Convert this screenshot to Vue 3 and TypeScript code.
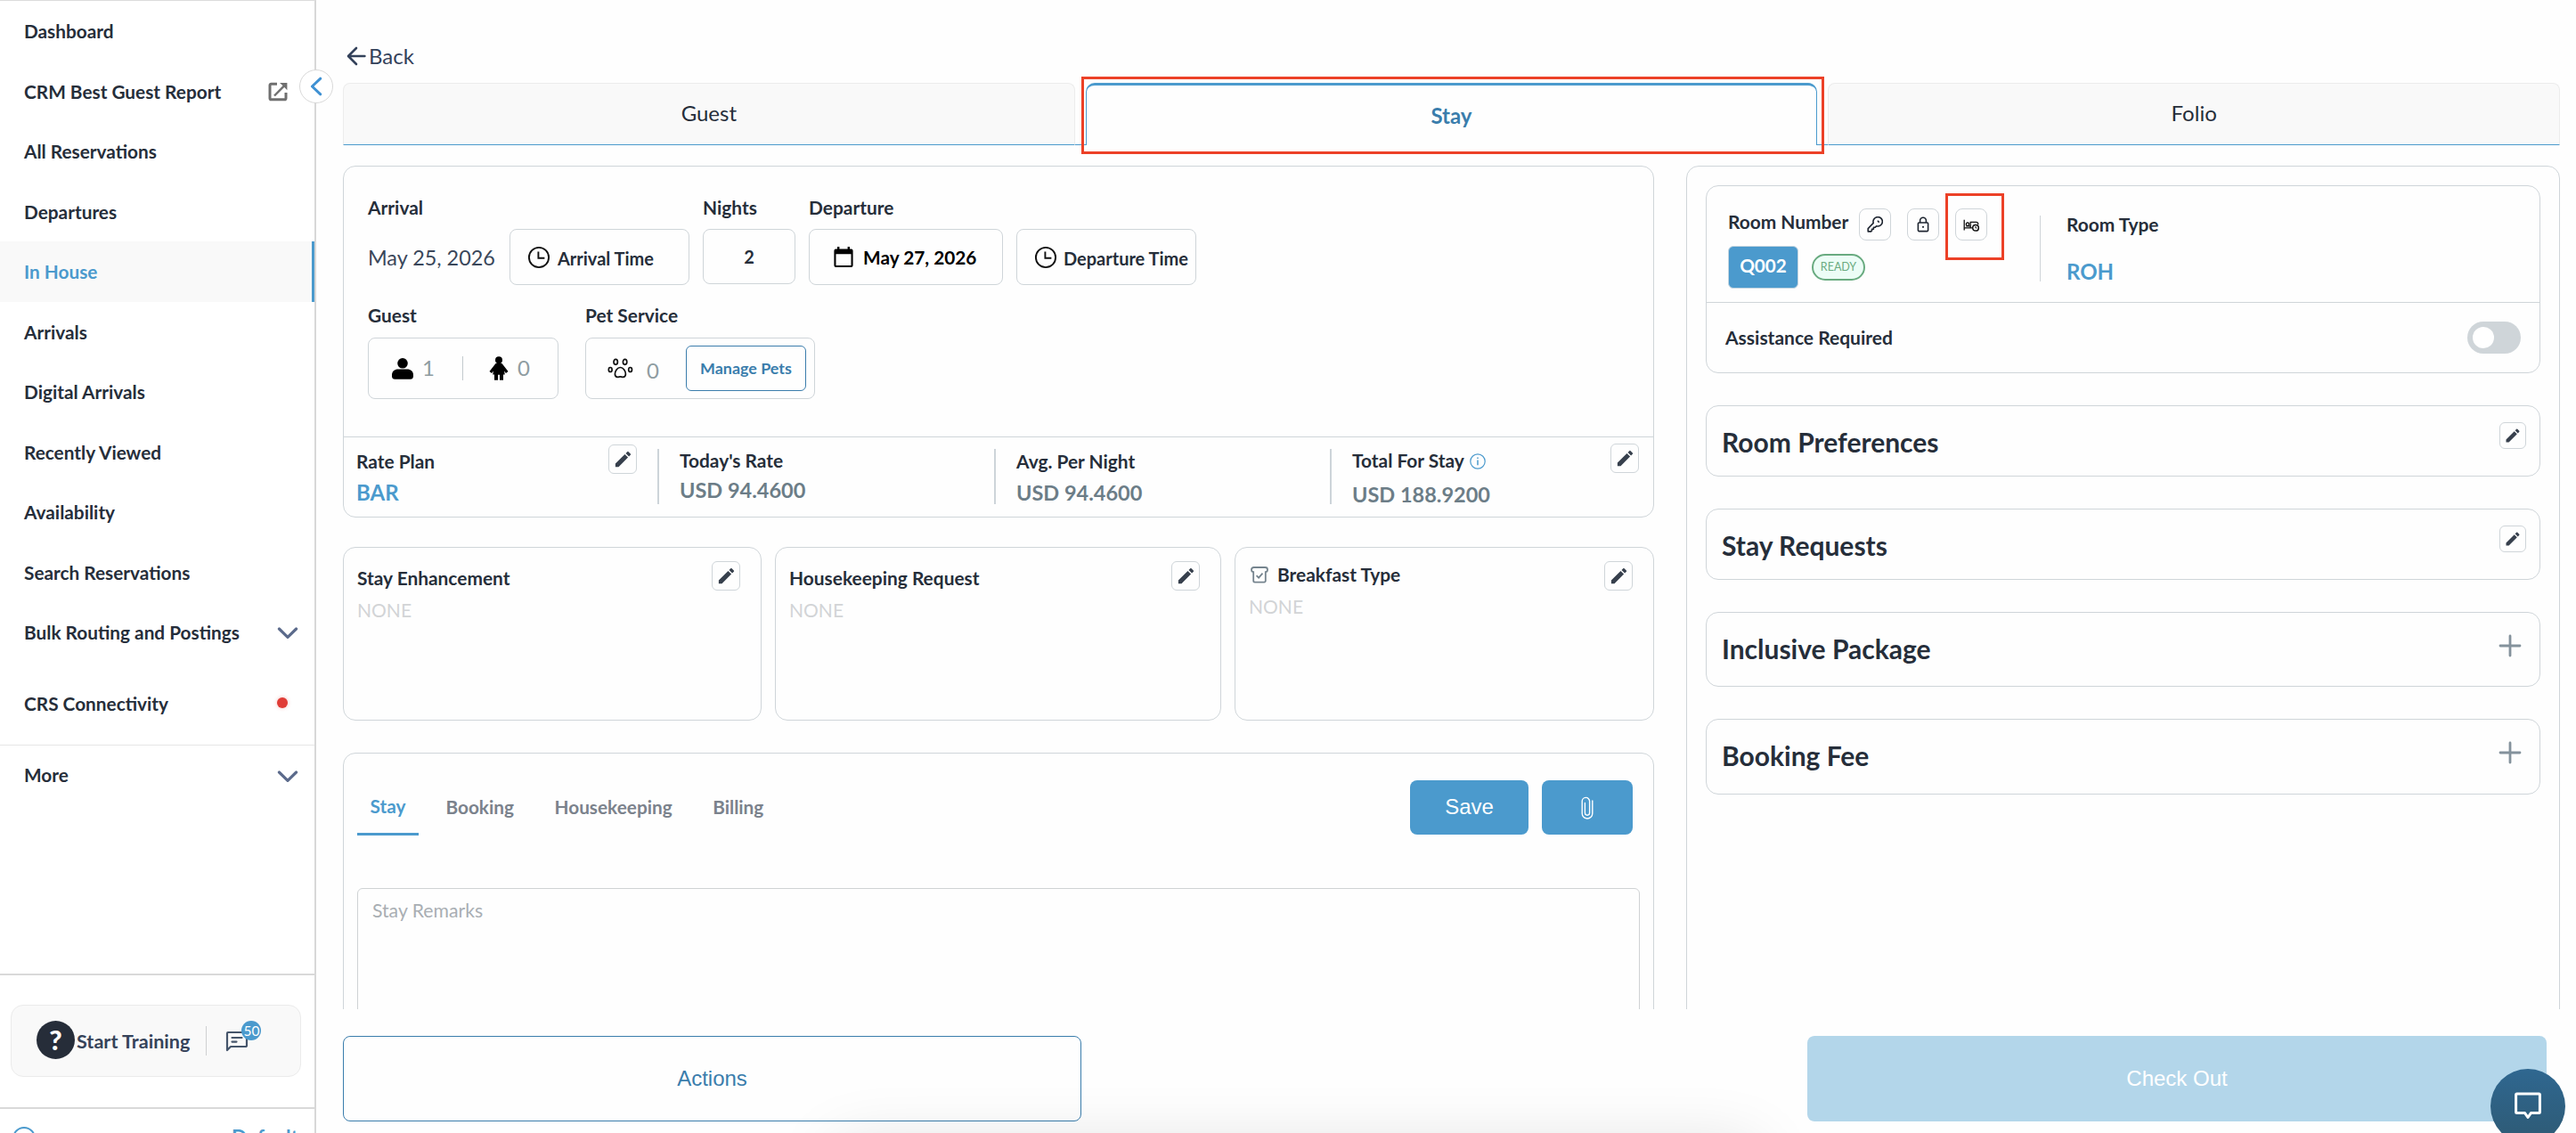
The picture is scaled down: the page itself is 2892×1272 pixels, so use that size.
<script setup lang="ts">
interface NavItem {
  label: string
  icon?: 'external' | 'chevron' | 'dot'
  tall?: boolean
  active?: boolean
}

const nav: NavItem[] = [
  { label: 'Dashboard' },
  { label: 'CRM Best Guest Report', icon: 'external' },
  { label: 'All Reservations' },
  { label: 'Departures' },
  { label: 'In House', active: true },
  { label: 'Arrivals' },
  { label: 'Digital Arrivals' },
  { label: 'Recently Viewed' },
  { label: 'Availability' },
  { label: 'Search Reservations' },
  { label: 'Bulk Routing and Postings', icon: 'chevron' },
  { label: 'CRS Connectivity', icon: 'dot', tall: true },
]

const pencil =
  'M3 17.25V21h3.75L17.81 9.94l-3.75-3.75L3 17.25zM20.71 7.04a.996.996 0 0 0 0-1.41l-2.34-2.34a.996.996 0 0 0-1.41 0l-1.83 1.83 3.75 3.75 1.83-1.83z'

const sections = [
  { title: 'Room Preferences', kind: 'editable', height: 80 },
  { title: 'Stay Requests', kind: 'editable', height: 80 },
  { title: 'Inclusive Package', kind: 'addable', height: 84 },
  { title: 'Booking Fee', kind: 'addable', height: 85 },
]
</script>

<template>
  <div class="app">
    <aside class="sidebar">
      <nav class="nav">
        <div v-for="n in nav" :key="n.label" class="nav-item" :class="{ active: n.active, tall: n.tall }">
          <span>{{ n.label }}</span>
          <svg v-if="n.icon === 'external'" class="ext" width="22" height="22" viewBox="0 0 22 22" fill="none" stroke="#6f6f6f" stroke-width="3">
            <path d="M10 2.2H3.6a1.6 1.6 0 0 0-1.6 1.6v14.4a1.6 1.6 0 0 0 1.6 1.6h14.8a1.6 1.6 0 0 0 1.6-1.6V12" />
            <path d="M7 15.5L18.5 3.8" stroke-width="2.4" />
            <path d="M13 .9h8.4v8.4l-2.6-2.7-3-3z" fill="#6f6f6f" stroke="none" />
          </svg>
          <svg v-else-if="n.icon === 'chevron'" class="chev" width="24" height="14" viewBox="0 0 24 14" fill="none" stroke="#5c6b8c" stroke-width="3.2" stroke-linecap="round" stroke-linejoin="round">
            <path d="M2.4 2L12 11.4 21.6 2" />
          </svg>
          <i v-else-if="n.icon === 'dot'" class="dot"></i>
        </div>
      </nav>
      <div class="nav-item more">
        <span>More</span>
        <svg class="chev" width="24" height="14" viewBox="0 0 24 14" fill="none" stroke="#5c6b8c" stroke-width="3.2" stroke-linecap="round" stroke-linejoin="round">
          <path d="M2.4 2L12 11.4 21.6 2" />
        </svg>
      </div>
      <div class="training-wrap">
        <div class="training">
          <span class="help">?</span>
          <span class="training-label">Start Training</span>
          <span class="tsep"></span>
          <span class="msg">
            <svg width="26" height="24" viewBox="0 0 26 24" fill="none" stroke="#45556b" stroke-width="2.2" stroke-linejoin="round" stroke-linecap="round">
              <path d="M2 22V3.2A1.2 1.2 0 0 1 3.2 2h19.6A1.2 1.2 0 0 1 24 3.2v13.6a1.2 1.2 0 0 1-1.2 1.2H6z" />
              <path d="M7.5 8h11M7.5 12.6h5" />
            </svg>
            <b class="badge">50</b>
          </span>
        </div>
      </div>
      <div class="property">
        <span class="ring"></span>
        <span>Default</span>
      </div>
      <button class="collapse">
        <svg width="16" height="22" viewBox="0 0 16 22" fill="none" stroke="#3f91d3" stroke-width="3" stroke-linecap="round" stroke-linejoin="round">
          <path d="M12.8 2.2L3.4 11l9.4 8.8" />
        </svg>
      </button>
    </aside>

    <main class="main">
      <div class="back">
        <svg width="22" height="22" viewBox="0 0 22 22" fill="none" stroke="#33415a" stroke-width="2.6" stroke-linecap="round" stroke-linejoin="round">
          <path d="M20.4 11H2.4M11 2L2 11l9 9" />
        </svg>
        <span>Back</span>
      </div>

      <div class="tabs">
        <div class="tab">Guest</div>
        <div class="gap"></div>
        <div class="tab on">Stay<span class="mark mark-tab"></span></div>
        <div class="gap"></div>
        <div class="tab">Folio</div>
      </div>

      <div class="content">
        <section class="left">
          <div class="card stay">
            <div class="stay-top">
              <div class="fields">
                <div class="field arrival">
                  <label>Arrival</label>
                  <div class="row">
                    <span class="date">May 25, 2026</span>
                    <div class="box time">
                      <svg width="26" height="26" viewBox="0 0 26 26" fill="none" stroke="#111" stroke-width="1.9"><circle cx="13" cy="13" r="11.1" /><path d="M12.4 6.6v7.2h7" /></svg>
                      <span>Arrival Time</span>
                    </div>
                  </div>
                </div>
                <div class="field nights">
                  <label>Nights</label>
                  <div class="box">2</div>
                </div>
                <div class="field departure">
                  <label>Departure</label>
                  <div class="box">
                    <svg width="22" height="24" viewBox="0 0 22 24"><path fill="#000" fill-rule="evenodd" d="M4 0h2.400v2.400h9.200V0H18v2.400h1.600A2 2 0 0 1 21.600 4.400V21a2 2 0 0 1-2 2H2.400a2 2 0 0 1-2-2V4.400a2 2 0 0 1 2-2H4zM2.500 8.200V21h17V8.200z" /></svg>
                    <span>May 27, 2026</span>
                  </div>
                </div>
                <div class="field deptime">
                  <div class="box time">
                    <svg width="26" height="26" viewBox="0 0 26 26" fill="none" stroke="#111" stroke-width="1.9"><circle cx="13" cy="13" r="11.1" /><path d="M12.4 6.6v7.2h7" /></svg>
                    <span>Departure Time</span>
                  </div>
                </div>
              </div>

              <div class="fields second">
                <div class="field guests">
                  <label>Guest</label>
                  <div class="box">
                    <svg width="24" height="24" viewBox="0 0 24 24"><circle cx="12" cy="5.800" r="5.800" /><path d="M0 20.500v-1.500c0-4 3-6.400 7-6.400h10c4 0 7 2.400 7 6.400v1.500c0 2-1.300 3.300-3.300 3.300H3.300C1.300 23.800 0 22.500 0 20.500z" /></svg>
                    <span class="num n1">1</span>
                    <i class="gsep"></i>
                    <svg class="child" width="22" height="28" viewBox="0 0 22 28"><circle cx="11" cy="4.200" r="4" /><path d="M7.500 8h7l7 9-2.500 2-2-2.500.8 4H16v6.300h-4v-6h-2v6H6v-6.300H4.200l.8-4L3 19 .500 17z" /></svg>
                    <span class="num">0</span>
                  </div>
                </div>
                <div class="field pets">
                  <label>Pet Service</label>
                  <div class="box">
                    <svg width="29" height="23" viewBox="0 0 29 23" fill="none" stroke="#111" stroke-width="1.700"><ellipse cx="9.200" cy="4.300" rx="2.200" ry="3" /><ellipse cx="19.600" cy="4.300" rx="2.200" ry="3" /><ellipse cx="3.200" cy="13" rx="1.900" ry="2.500" /><ellipse cx="25.600" cy="13" rx="1.900" ry="2.500" /><path d="M14.400 10.500c-3.400 0-6 4.400-6 7.600 0 2 1.200 3.300 3 3.300 1.200 0 1.800-.5 3-.5s1.800.5 3 .5c1.800 0 3-1.300 3-3.300 0-3.200-2.600-7.600-6-7.600z" /></svg>
                    <span class="num n0">0</span>
                    <button class="manage">Manage Pets</button>
                  </div>
                </div>
              </div>
            </div>
            <div class="rates">
              <div class="rate r1">
                <div><h4>Rate Plan</h4><p class="blue">BAR</p></div>
                <button class="edit"><svg width="23" height="23" viewBox="0 0 24 24" fill="#37404d"><path :d="pencil" /></svg></button>
              </div>
              <i class="rsep"></i>
              <div class="rate r2"><div><h4>Today's Rate</h4><p>USD 94.4600</p></div></div>
              <i class="rsep"></i>
              <div class="rate r3"><div><h4>Avg. Per Night</h4><p>USD 94.4600</p></div></div>
              <i class="rsep"></i>
              <div class="rate r4">
                <div>
                  <h4>Total For Stay
                    <svg width="18" height="18" viewBox="0 0 18 18" fill="none" stroke="#4b9acd" stroke-width="1.200"><circle cx="9" cy="9" r="8.200" /><path d="M9 7.600v5.600M9 4.600v1.500" stroke-width="1.500" /></svg>
                  </h4>
                  <p>USD 188.9200</p>
                </div>
                <button class="edit"><svg width="23" height="23" viewBox="0 0 24 24" fill="#37404d"><path :d="pencil" /></svg></button>
              </div>
            </div>
          </div>

          <div class="trio">
            <div class="card mini m1">
              <div><h4>Stay Enhancement</h4><p>NONE</p></div>
              <button class="edit"><svg width="23" height="23" viewBox="0 0 24 24" fill="#37404d"><path :d="pencil" /></svg></button>
            </div>
            <div class="card mini m2">
              <div><h4>Housekeeping Request</h4><p>NONE</p></div>
              <button class="edit"><svg width="23" height="23" viewBox="0 0 24 24" fill="#37404d"><path :d="pencil" /></svg></button>
            </div>
            <div class="card mini m3">
              <div>
                <h4>
                  <svg width="20" height="19" viewBox="0 0 20 19" fill="none" stroke="#75848e" stroke-width="1.800"><path d="M3.600 1h12.800C18 1 19 2 19 3.500S18.200 6.200 16.800 6.200V16a1.600 1.600 0 0 1-1.600 1.600H4.800A1.600 1.600 0 0 1 3.200 16V6.200C1.800 6.200 1 5 1 3.500S2 1 3.600 1z" /><path d="M6.600 10.200l2.500 2.500 4.400-5" /></svg>
                  Breakfast Type
                </h4>
                <p>NONE</p>
              </div>
              <button class="edit"><svg width="23" height="23" viewBox="0 0 24 24" fill="#37404d"><path :d="pencil" /></svg></button>
            </div>
          </div>

          <div class="card remarks">
            <div class="rhead">
              <div class="rtabs">
                <span class="on">Stay</span><span>Booking</span><span>Housekeeping</span><span>Billing</span>
              </div>
              <div class="rbtns">
                <button class="save">Save</button>
                <button class="attach">
                  <svg width="14" height="26" viewBox="0 0 14 26" fill="none" stroke="#fff" stroke-width="1.400" stroke-linecap="round"><path d="M12.800 5v14.200a5.800 5.800 0 0 1-11.600 0V5.600a4.200 4.200 0 0 1 8.400 0v13a2.600 2.600 0 0 1-5.200 0V7.500" /></svg>
                </button>
              </div>
            </div>
            <div class="textarea">Stay Remarks</div>
          </div>
        </section>

        <section class="right card">
          <div class="card room">
            <div class="room-top">
              <div class="rn">
                <div class="rn-head">
                  <h4>Room Number</h4>
                  <button class="ib">
                    <svg width="18" height="18" viewBox="0 0 18 18" fill="none" stroke="#1e2530" stroke-width="1.600" stroke-linejoin="round"><path d="M7.200 7.400A5.200 5.200 0 1 1 10.600 10.800L9 12.300H7.400v1.900H5.500V16L4.500 16.900H1.200v-3.300z" /><path d="M12.300 5.200l.9.900" stroke-linecap="round" /></svg>
                  </button>
                  <button class="ib">
                    <svg width="14" height="18" viewBox="0 0 14 18" fill="none" stroke="#1e2530" stroke-width="1.600"><rect x="1.400" y="7" width="11.200" height="9.600" rx="1" /><path d="M3.600 7V4.600a3.400 3.400 0 0 1 6.800 0V7" /><circle cx="7" cy="11.800" r="1.100" fill="#1e2530" stroke="none" /></svg>
                  </button>
                  <button class="ib marked">
                    <svg width="18" height="14" viewBox="0 0 18 14" fill="none" stroke="#111" stroke-width="1.300"><path d="M1.200.8v11.800M1.200 9.800h9.200M8.200 9.800V3.400h6.500q2 0 2 2v.8" /><circle cx="5" cy="5.700" r="1.700" /><path d="M3.200 7.900h4.800" /><circle cx="14" cy="9.800" r="3.300" stroke-width="1.500" /><path d="M14 8v2h1.300" stroke-width="1" /></svg>
                    <span class="mark mark-btn"></span>
                  </button>
                </div>
                <div class="rn-vals">
                  <span class="q">Q002</span><span class="ready">READY</span>
                </div>
              </div>
              <i class="vsep"></i>
              <div class="rt"><h4>Room Type</h4><p>ROH</p></div>
            </div>
            <div class="assist"><span>Assistance Required</span><i class="toggle"></i></div>
          </div>

          <div v-for="s in sections" :key="s.title" class="card sect" :class="s.kind" :style="{ height: s.height + 'px' }">
            <h3>{{ s.title }}</h3>
            <button v-if="s.kind === 'editable'" class="edit sm"><svg width="20" height="20" viewBox="0 0 24 24" fill="#37404d"><path :d="pencil" /></svg></button>
            <svg v-else class="plus" width="26" height="26" viewBox="0 0 26 26" stroke="#84929c" stroke-width="2.800" stroke-linecap="round"><path d="M13 2v22M2 13h22" /></svg>
          </div>
        </section>
      </div>

      <footer class="footer">
        <button class="actions">Actions</button>
        <button class="checkout">Check Out</button>
        <span class="glow"></span>
      </footer>
    </main>

    <button class="chat">
      <svg width="32" height="34" viewBox="0 0 32 34" fill="none" stroke="#fff" stroke-width="3" stroke-linejoin="round"><path d="M3.600 3h24.800a1 1 0 0 1 1 1v19.600a1 1 0 0 1-1 1h-9L16 29.500l-3.400-4.900h-9a1 1 0 0 1-1-1V4a1 1 0 0 1 1-1z" /></svg>
    </button>
  </div>
</template>

<style>
body { background: #fff; }
</style>

<style scoped>
* { box-sizing: border-box; }
h3, h4, p { margin: 0; }
button { padding: 0; border: 0; background: none; font: inherit; color: inherit; }
.app { position: relative; display: flex; width: 2892px; height: 1272px; overflow: hidden; background: #fefefe; font-family: "Lato", sans-serif; font-size: 20px; line-height: 24px; color: #262e3a; }
h4, label { font-size: 20.900px; line-height: 24px; font-weight: 700; white-space: nowrap; }

.sidebar { position: relative; display: flex; flex-direction: column; flex: none; width: 355px; height: 1272px; border-right: 2px solid #d8d8d8; border-top: 1px solid #dcdcdc; background: #fff; }
.nav-item { display: flex; align-items: center; justify-content: space-between; height: 67.500px; padding: 1px 32px 0 27px; font-size: 20.800px; font-weight: 700; white-space: nowrap; }
.nav-item.active { color: #4b9acd; background: #f9f9f9; border-right: 3px solid #4b9acd; }
.nav-item.tall { height: 92px; }
.ext { margin-right: -2px; }
.chev { margin-right: -14px; margin-top: 2px; }
.dot { width: 12px; height: 12px; border-radius: 50%; background: #e03c36; box-shadow: 0 0 4px rgba(224, 60, 54, .35); margin-right: -2px; margin-top: -3px; }
.more { height: 70px; padding-top: 0; padding-bottom: 2px; border-top: 1px solid #e6e6e6; }
.more .chev { margin-top: 3px; }
.training-wrap { margin-top: auto; padding: 33px 15px 0 12px; height: 152px; border-top: 2px solid #d9d9d9; border-bottom: 2px solid #d9d9d9; }
.training { display: flex; align-items: center; height: 81px; border: 1px solid #ebebeb; border-radius: 14px; background: #f9f9f9; padding-left: 28px; }
.help { width: 43px; height: 43px; border-radius: 50%; background: #262d39; color: #fff; font-size: 31px; line-height: 42px; font-weight: 900; text-align: center; margin-top: -2px; }
.training-label { margin-left: 2px; font-size: 21.600px; font-weight: 700; color: #36435a; white-space: nowrap; }
.tsep { width: 1px; height: 33px; background: #cfd0d2; margin-left: 18px; }
.msg { position: relative; margin-left: 21px; height: 24px; }
.msg svg { display: block; }
.badge { position: absolute; left: 18px; top: -11px; width: 22px; height: 22px; border-radius: 50%; background: #4b9acd; color: #fff; font-size: 15.500px; line-height: 22px; font-weight: 400; text-align: center; }
.property { display: flex; justify-content: space-between; height: 27px; padding: 20px 18px 0 14px; color: #4b9acd; font-size: 22.500px; font-weight: 700; overflow: hidden; }
.ring { width: 26px; height: 26px; flex: none; border: 2px solid #4b9acd; border-radius: 50%; }
.collapse { position: absolute; left: 336px; top: 77px; width: 38px; height: 38px; border-radius: 50%; border: 1px solid #d9d9d9; background: #fff; display: flex; align-items: center; justify-content: center; z-index: 2; }

.main { flex: 1; display: flex; flex-direction: column; padding: 49px 18px 0 30px; min-width: 0; }
.back { display: flex; align-items: center; gap: 3px; height: 28px; margin-left: 4px; font-size: 24px; line-height: 28px; color: #33415a; }
.tabs { display: flex; height: 70px; margin-top: 16px; flex: none; }
.tab { flex: 1; display: flex; align-items: center; justify-content: center; border: 1px solid #ececec; border-bottom: 1px solid #4b9acd; border-radius: 8px 8px 0 0; background: #f9f9f9; font-size: 24px; padding-bottom: 2px; }
.tab.on { position: relative; background: #fefefe; border: 1px solid #4b9acd; border-top: 3px solid #4b9acd; border-bottom: 0; border-radius: 10px 10px 0 0; color: #3a7dac; font-weight: 700; padding-bottom: 0; }
.gap { width: 12px; border-bottom: 1px solid #4b9acd; }
.mark { position: absolute; border: 3px solid #ec4127; }
.mark-tab { left: -6px; top: -10px; width: 834px; height: 87px; }
.mark-btn { left: -12.500px; top: -18px; width: 66px; height: 75px; }

.content { display: flex; justify-content: space-between; height: 947px; margin-top: 23px; overflow: hidden; flex: none; }
.card { border: 1px solid #cfd5d9; border-radius: 14px; }
.left { width: 1472px; }
.stay { height: 395px; }
.stay-top { height: 304px; padding: 34px 0 0 27px; border-bottom: 1px solid #cfd5d9; }
.fields { display: flex; gap: 15px; }
.second { margin-top: 22px; gap: 30px; }
.field { display: flex; flex-direction: column; }
.field .box { margin-top: 12px; height: 63px; border: 1px solid #cfd5d9; border-radius: 8px; display: flex; align-items: center; font-weight: 700; white-space: nowrap; }
.arrival { width: 361px; }
.row { display: flex; justify-content: space-between; }
.date { margin-top: 30px; font-size: 23.400px; line-height: 28px; color: #3a475a; white-space: nowrap; }
.time { width: 202px; padding-left: 19px; gap: 8px; }
.time span { margin-top: 3px; }
.time svg { flex: none; }
.nights { width: 104px; }
.nights .box { height: 62px; justify-content: center; }
.departure { width: 218px; }
.departure .box { color: #000; padding-left: 27px; gap: 11px; font-size: 20.800px; }
.deptime { padding-top: 24px; }
.deptime .time { padding-left: 19px; gap: 7px; }
.second .box { height: 69px; margin-top: 13px; }
.guests { width: 214px; }
.guests .box { padding-left: 26px; }
.num { font-size: 24px; line-height: 28px; font-weight: 400; color: #8f9ca1; margin-top: -1px; }
.n1 { margin-left: 10px; margin-top: -2px; }
.gsep { width: 1px; height: 27px; background: #c3cace; margin: 0 29px 0 31px; }
.child { margin-right: 10px; }
.pets .box { width: 258px; padding-left: 24px; }
.n0 { margin-left: 15px; margin-top: 5px; }
.manage { width: 135px; height: 51px; margin-left: 30px; border: 1px solid #3a7dac; border-radius: 6px; color: #3a7dac; font-size: 17.900px; line-height: 22px; padding-bottom: 2px; font-weight: 700; }

.rates { display: flex; height: 89px; padding: 13px 0 0 14px; }
.rate { display: flex; justify-content: space-between; }
.rate > div { padding-top: 2px; }
.rate p { margin-top: 9px; font-size: 23.500px; line-height: 28px; font-weight: 700; color: #6c7d87; white-space: nowrap; }
.rate p.blue { font-size: 24px; color: #4b9acd; }
.r1 { width: 315px; }
.r1 .edit { margin-top: -5px; }
.r2 > div, .r4 > div { padding-top: 1px; }
.r2 p { margin-top: 7px; }
.r4 p { margin-top: 12px; }
.r1 + .rsep { margin-left: 23px; }
.r2 { width: 353px; margin-left: 23px; }
.r3 { width: 352px; margin-left: 23px; }
.r4 { width: 322px; margin-left: 23px; }
.r4 .edit { margin-top: -6px; }
.r4 svg { vertical-align: -2px; }
.r4 h4 svg { margin-left: 2px; }
.rsep { width: 2px; height: 62px; background: #cdd4d9; flex: none; }
.edit { width: 32px; height: 33px; flex: none; border: 1px solid #cfd5d9; border-radius: 6px; display: flex; align-items: center; justify-content: center; }
.edit.sm { width: 30px; height: 30px; }

.trio { display: grid; grid-template-columns: 470px 501px 471px; gap: 15px; height: 195px; margin-top: 33px; }
.mini { display: flex; justify-content: space-between; padding: 22px 23px 0 15px; }
.mini p { margin-top: 12px; font-size: 21px; color: #d2d4d6; }
.mini .edit { margin-top: -7px; }
.m3 > div { margin-top: -4px; }
.m3 h4 { display: flex; align-items: center; gap: 10px; padding-left: 2px; }

.remarks { height: 400px; margin-top: 36px; padding: 30px 15px 0 15px; }
.rhead { display: flex; justify-content: space-between; height: 62px; }
.rtabs { display: flex; color: #7b828c; font-size: 20.800px; font-weight: 700; }
.rtabs span { padding: 18px 15px 0 15px; margin-right: 15.500px; height: 62px; }
.rtabs .on { color: #4b9acd; border-bottom: 3px solid #4b9acd; padding: 17px 14.500px 0; }
.rbtns { display: flex; gap: 15px; padding-right: 8px; }
.save, .attach { height: 61px; width: 133px; border-radius: 8px; background: #4b9acd; color: #fff; font-family: "Liberation Sans", Arial, sans-serif; font-size: 24px; display: flex; align-items: center; justify-content: center; }
.save { padding-bottom: 1px; }
.attach { width: 102px; }
.textarea { height: 400px; margin-top: 59px; border: 1px solid #cfd2d4; border-radius: 6px; padding: 12px 16px; font-size: 21.200px; color: #a9aeb3; }

.right { width: 981px; height: 1400px; padding: 21px 21px 0; }
.room { height: 211px; margin-bottom: 36px; }
.room-top { display: flex; height: 131px; border-bottom: 1px solid #cfd5d9; padding-left: 24px; }
.rn { width: 350px; }
.rn-head { display: flex; align-items: flex-start; padding-top: 25px; }
.rn-head h4 { margin-top: 3px; width: 147px; }
.ib { position: relative; width: 36px; height: 36px; margin-right: 18px; border: 1px solid #cfd5d9; border-radius: 8px; display: flex; align-items: center; justify-content: center; }
.marked svg { margin-top: 2px; }
.rn-vals { display: flex; align-items: center; margin-top: 6px; }
.q { width: 79px; height: 48px; border: 1px solid #c5d5e0; border-radius: 6px; background: #4b9acd; color: #fff; font-size: 20.700px; line-height: 42px; font-weight: 700; text-align: center; }
.ready { width: 60px; height: 30px; margin-left: 15px; border: 2.500px solid #69ab80; border-radius: 15px; background: #ecfdf6; color: #69ab80; font-size: 12.500px; line-height: 25px; text-align: center; }
.vsep { width: 1px; height: 74px; margin-top: 33px; background: #cfd5d9; }
.rt { margin-left: 29px; padding-top: 31px; }
.rt p { margin-top: 27px; font-size: 24px; line-height: 28px; font-weight: 700; color: #4b9acd; }
.assist { display: flex; align-items: center; justify-content: space-between; height: 78px; padding: 0 21px; font-size: 21px; font-weight: 700; }
.toggle { width: 60px; height: 36px; border-radius: 18px; background: #cfd5d9; }
.toggle::before { content: ""; display: block; width: 24px; height: 24px; margin: 6px; border-radius: 50%; background: #fff; }
.sect { display: flex; justify-content: space-between; margin-bottom: 36px; padding: 18px 15px 0 17px; }
.sect h3 { font-size: 30px; line-height: 36px; font-weight: 700; margin-top: 4px; white-space: nowrap; }
.addable { padding: 22px 20px 0 17px; }
.sect.addable h3 { margin-top: 0; }
.plus { margin-top: 2px; }

.footer { position: relative; display: flex; justify-content: space-between; margin-top: 30px; padding-right: 15px; font-family: "Liberation Sans", Arial, sans-serif; font-size: 24px; }
.footer button { width: 829px; height: 96px; border-radius: 8px; }
.actions { border: 1px solid #3a7dac; color: #3a7dac; }
.footer .checkout { width: 830px; background: #b3d6ea; color: #fff; }
.glow { position: absolute; left: 560px; top: 132px; width: 1020px; height: 60px; box-shadow: 0 0 75px 6px rgba(0, 0, 0, .14); }
.chat { position: absolute; left: 2796px; top: 1200px; width: 84px; height: 84px; border-radius: 50%; background: linear-gradient(#2f6790, #2e5a74); display: flex; align-items: center; justify-content: center; }
.chat svg { margin-top: -1px; }
</style>
